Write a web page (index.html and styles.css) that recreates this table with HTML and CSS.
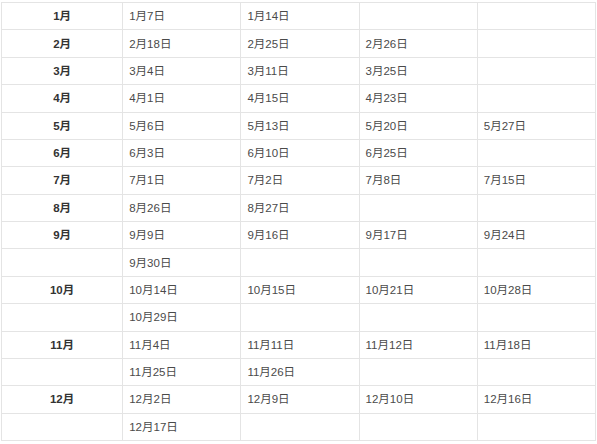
FILE: index.html
```html
<!DOCTYPE html>
<html lang="zh">
<head>
<meta charset="utf-8">
<link rel="stylesheet" href="styles.css">
</head>
<body>
<table class="cal">
  <colgroup>
    <col class="c-month"><col class="c-d"><col class="c-d"><col class="c-d"><col class="c-d">
  </colgroup>
  <tbody>
    <tr><th>1月</th><td>1月7日</td><td>1月14日</td><td></td><td></td></tr>
    <tr><th>2月</th><td>2月18日</td><td>2月25日</td><td>2月26日</td><td></td></tr>
    <tr><th>3月</th><td>3月4日</td><td>3月11日</td><td>3月25日</td><td></td></tr>
    <tr><th>4月</th><td>4月1日</td><td>4月15日</td><td>4月23日</td><td></td></tr>
    <tr><th>5月</th><td>5月6日</td><td>5月13日</td><td>5月20日</td><td>5月27日</td></tr>
    <tr><th>6月</th><td>6月3日</td><td>6月10日</td><td>6月25日</td><td></td></tr>
    <tr><th>7月</th><td>7月1日</td><td>7月2日</td><td>7月8日</td><td>7月15日</td></tr>
    <tr><th>8月</th><td>8月26日</td><td>8月27日</td><td></td><td></td></tr>
    <tr><th>9月</th><td>9月9日</td><td>9月16日</td><td>9月17日</td><td>9月24日</td></tr>
    <tr><th></th><td>9月30日</td><td></td><td></td><td></td></tr>
    <tr><th>10月</th><td>10月14日</td><td>10月15日</td><td>10月21日</td><td>10月28日</td></tr>
    <tr><th></th><td>10月29日</td><td></td><td></td><td></td></tr>
    <tr><th>11月</th><td>11月4日</td><td>11月11日</td><td>11月12日</td><td>11月18日</td></tr>
    <tr><th></th><td>11月25日</td><td>11月26日</td><td></td><td></td></tr>
    <tr><th>12月</th><td>12月2日</td><td>12月9日</td><td>12月10日</td><td>12月16日</td></tr>
    <tr><th></th><td>12月17日</td><td></td><td></td><td></td></tr>
  </tbody>
</table>
</body>
</html>
```

FILE: styles.css
```css
html, body {
  margin: 0;
  padding: 0;
  background: #fff;
}

.cal {
  margin: 2px 0 0 1px;
  width: 595px;
  height: 439px;
  border-collapse: collapse;
  table-layout: fixed;
  font-family: "Liberation Sans", "Noto Sans CJK SC", sans-serif;
  font-size: 11.5px;
  color: #4a4a4a;
}

.c-month { width: 121px; }
.c-d { width: 118px; }

.cal th,
.cal td {
  border: 1px solid #e4e4e4;
  padding: 0 0 0 6px;
  vertical-align: middle;
  line-height: 14px;
}

.cal th {
  text-align: center;
  padding: 0;
  font-weight: bold;
  color: #333;
}

.cal td {
  text-align: left;
}
```
